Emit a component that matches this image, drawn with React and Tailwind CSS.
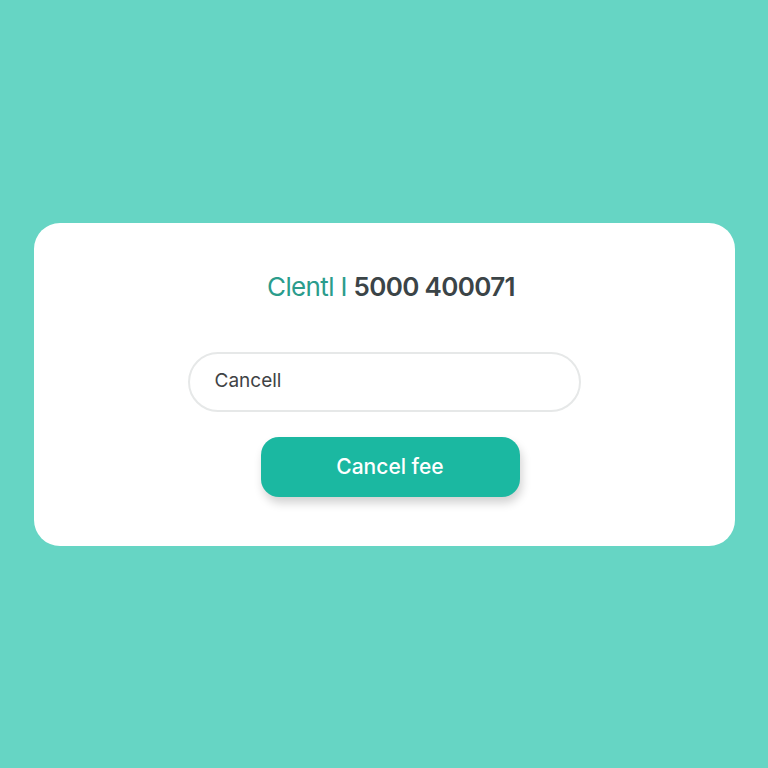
import React from 'react';

const App = () => {
    return (
        <div className="min-h-screen w-full bg-[#66d5c4] flex items-center justify-center" style={{ fontFamily: 'Inter, "Noto Sans", sans-serif' }}>
            <div className="w-[701px] h-[323px] bg-white rounded-[26px] flex flex-col items-center pt-[47px]">
                {/* Title */}
                <h1 className="text-[26px] leading-[33px] ml-[14px] tracking-tight">
                    <span className="text-[#2b9c8c] font-normal">Clentl I </span>
                    <span className="text-[#3b4447] font-semibold">5000 400071</span>
                </h1>

                {/* Input */}
                <div className="mt-[49px] w-[393px] h-[60px] rounded-full border-2 border-[#e6e8e8] flex items-center px-[25px]">
                    <span className="text-[19px] text-[#3f4345]">Cancell</span>
                </div>

                {/* Button */}
                <button className="mt-[25px] ml-[12px] w-[259px] h-[60px] rounded-[18px] bg-[#1bb8a1] text-white text-[21px] font-medium shadow-[2px_6px_10px_rgba(0,0,0,0.18)]">
                    Cancel fee
                </button>
            </div>
        </div>
    );
};

export default App;
